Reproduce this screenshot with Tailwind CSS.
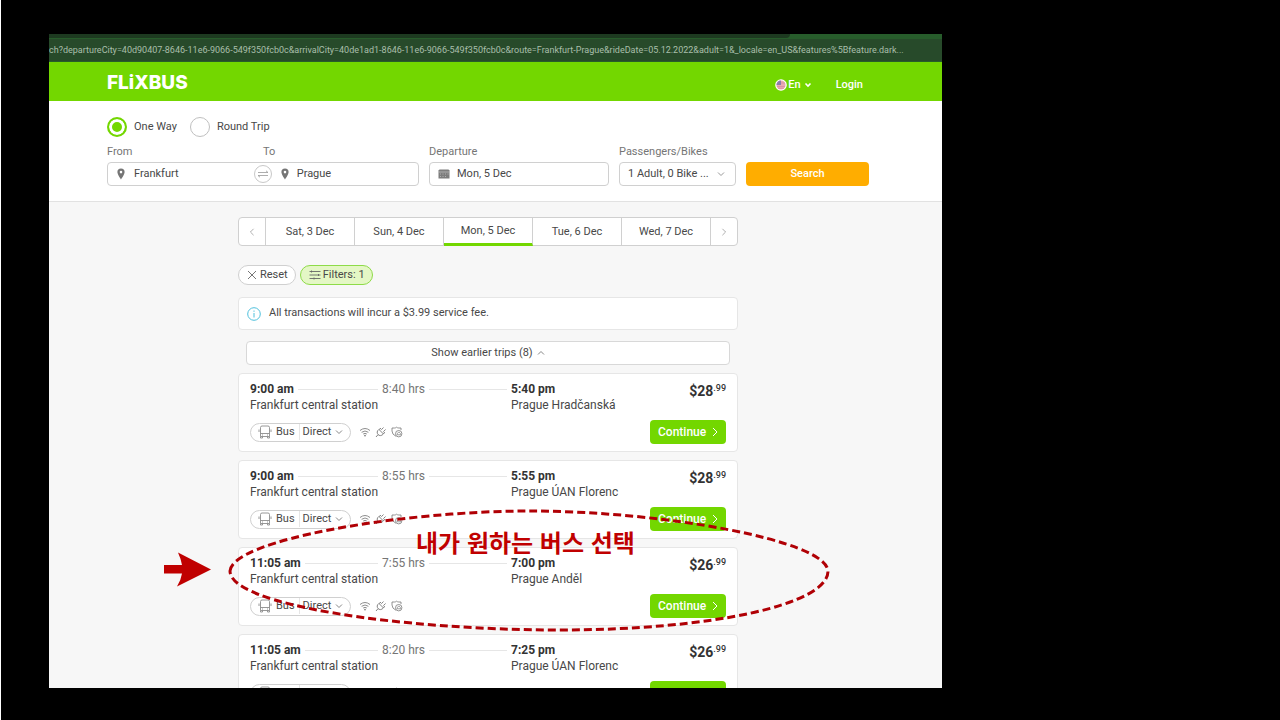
<!DOCTYPE html>
<html lang="en">
<head>
  <meta charset="UTF-8" />
  <meta name="viewport" content="width=device-width, initial-scale=1" />
  <title>FlixBus - Frankfurt to Prague</title>
  <script src="https://cdn.jsdelivr.net/npm/@tailwindcss/browser@4"></script>
</head>
<body class="bg-black font-['Roboto',sans-serif] text-[#484848] antialiased">

  <!-- Shared icons -->
  <svg class="hidden">
    <symbol id="pin" viewBox="0 0 10 12">
      <path fill="#757575" fill-rule="evenodd" d="M5 .5A3.6 3.6 0 0 0 1.4 4.1C1.4 6.700 5 11.500 5 11.500S8.600 6.700 8.600 4.100A3.600 3.600 0 0 0 5 .5zM5 2.800a1.300 1.300 0 1 1 0 2.600 1.300 1.300 0 0 1 0-2.600z" />
    </symbol>
    <symbol id="down" viewBox="0 0 8 6"><path d="M1 1.500l3 3 3-3" fill="none" stroke="currentColor" /></symbol>
    <symbol id="right" viewBox="0 0 6 10"><path d="M1 1l4 4-4 4" fill="none" stroke="currentColor" /></symbol>
    <symbol id="bus" viewBox="0 0 14 14">
      <path d="M2.500 11.500V2.500q0-1.500 1.500-1.500h6q1.500 0 1.500 1.500v9zM2.500 8.500h9M1 4.500v2.500M13 4.500v2.500M2.500 11.500v1.500h2v-1.500M9.500 11.500v1.500h2v-1.500M4 10h1M9 10h1" fill="none" stroke="#8c8c8c" stroke-width=".9" />
    </symbol>
    <symbol id="wifi" viewBox="0 0 12 10">
      <path d="M1 3.500q5-4 10 0M2.600 5.300q3.400-2.600 6.800 0M4.200 7q1.800-1.300 3.600 0" fill="none" stroke="#808080" stroke-width=".9" />
      <circle cx="6" cy="8.600" r=".9" fill="#808080" />
    </symbol>
    <symbol id="plug" viewBox="0 0 12 12">
      <path d="M4 3.500l4.500 4.500M3.800 3.500C1.800 5 1.800 7 3 8.500s3.500 1.500 5.300-.4M4 3.500l2-1.300M8.500 8l1.200-2M6.300 3.800L8.500 1.500M8.300 5.700l2.300-2.200M3 8.700L1 11" fill="none" stroke="#777" stroke-width=".9" />
    </symbol>
    <symbol id="shield" viewBox="0 0 12 12">
      <path d="M5 10.300Q1 8.500 1 5V2h2.500q1.200 0 2-.8 1 .8 2.300.8H10v2" fill="none" stroke="#777" stroke-width=".8" />
      <circle cx="7.700" cy="7.700" r="3.200" fill="none" stroke="#777" stroke-width=".8" />
      <path d="M6.200 7.500l1.700-1.500 1.500 1.500v1.300H6.200z" fill="none" stroke="#777" stroke-width=".7" />
    </symbol>
  </svg>

  <div class="h-screen border-l border-white pt-[34px] pb-8 pl-12 pr-[338px]">
    <div class="relative h-full">
      <div class="flex h-full flex-col overflow-hidden bg-[#f7f7f7]">

        <!-- Browser bar -->
        <div class="shrink-0 bg-[#275c2b]">
          <div class="mr-[152px] h-1 rounded-br bg-[#1d3a20]"></div>
          <div class="mt-px flex h-[22px] items-center bg-[#274a2a]">
            <input aria-label="Address" readonly class="w-full font-['Roboto',sans-serif] text-[9px] leading-[14px] text-[#a9bfaa] outline-none" value="ch?departureCity=40d90407-8646-11e6-9066-549f350fcb0c&amp;arrivalCity=40de1ad1-8646-11e6-9066-549f350fcb0c&amp;route=Frankfurt-Prague&amp;rideDate=05.12.2022&amp;adult=1&amp;_locale=en_US&amp;features%5Bfeature.dark..." />
          </div>
          <div class="h-px"></div>
        </div>

        <!-- Header -->
        <header class="flex h-[39px] shrink-0 items-center justify-between bg-[#73d700] pl-[58px] pr-[79px] text-white">
          <a href="#" class="pt-0.5 font-['Inter',sans-serif] text-[19px] leading-5 font-extrabold">FLiXBUS</a>
          <nav class="flex items-center gap-6 pt-1.5 text-[11px] leading-4 font-medium">
            <button class="flex items-center gap-px">
              <svg class="size-3" viewBox="0 0 12 12">
                <circle cx="6" cy="6" r="5.200" fill="#e9a9b4" stroke="#fff" stroke-width="1.200" />
                <path d="M1.500 6A4.500 4.500 0 0 1 6 1.500V6z" fill="#8a7cae" />
                <path d="M6 4h4M2 7.500h8M3 9.300h6" stroke="#d58a9c" stroke-width=".7" />
              </svg>
              En
              <svg class="ml-0.5 h-1.5 w-2" viewBox="0 0 8 6"><path d="M1.500 1.500l2.500 2.500 2.500-2.500" fill="none" stroke="#fff" stroke-width="1.600" /></svg>
            </button>
            <a href="#">Login</a>
          </nav>
        </header>

        <!-- Search form -->
        <form class="h-[101px] shrink-0 border-b border-[#e2e2e2] bg-white pl-[58px] pr-[73px] pt-4 text-[11px] leading-4">
          <div class="flex h-5 items-center">
            <input type="radio" id="oneWay" name="trip" checked class="size-5 appearance-none rounded-full border-2 border-[#73d700] bg-white checked:bg-[#73d700] checked:shadow-[inset_0_0_0_3px_#fff]" />
            <label for="oneWay" class="ml-[7px] mr-[13px]">One Way</label>
            <input type="radio" id="roundTrip" name="trip" class="size-5 appearance-none rounded-full border border-[#c0c0c0] bg-white" />
            <label for="roundTrip" class="ml-[7px]">Round Trip</label>
          </div>
          <div class="mt-[7px] grid grid-cols-[312fr_180fr_117fr_123fr] items-end gap-[10px]">
            <div class="min-w-0">
              <div class="flex text-[#757575]">
                <label for="from" class="w-1/2">From</label>
                <label for="to">To</label>
              </div>
              <div class="mt-0.5 flex h-6 items-center rounded-sm border border-[#d0d0d0]">
                <div class="flex w-[47%] items-center">
                  <svg class="ml-2 h-3 w-[10px] shrink-0"><use href="#pin" /></svg>
                  <input id="from" class="ml-2 w-0 flex-1 outline-none" value="Frankfurt" />
                </div>
                <button type="button" aria-label="Swap" class="flex size-[18px] shrink-0 items-center justify-center rounded-full border border-[#c8c8c8]">
                  <svg class="h-2 w-3 shrink-0" viewBox="0 0 12 8"><path d="M1 2.500h10M9 .8l2 1.700M11 5.500H1M3 7.200L1 5.500" fill="none" stroke="#999" stroke-width=".8" /></svg>
                </button>
                <svg class="ml-2 h-3 w-[10px] shrink-0"><use href="#pin" /></svg>
                <input id="to" class="ml-[7px] w-0 flex-1 outline-none" value="Prague" />
              </div>
            </div>
            <div class="min-w-0">
              <label for="departure" class="block text-[#757575]">Departure</label>
              <div class="mt-0.5 flex h-6 items-center rounded-sm border border-[#d0d0d0]">
                <svg class="ml-2 h-[10px] w-3 shrink-0" viewBox="0 0 12 10">
                  <path d="M1.500 .5h9l1 1v8H.5v-8z" fill="#7d7d7d" />
                  <path d="M.5 3h11M2 5h1M4.500 5h1M7 5h1M9.500 5h1M2 7.500h1M4.500 7.500h1M7 7.500h1" stroke="#c5c5c5" stroke-width=".7" />
                </svg>
                <input id="departure" class="ml-[7px] w-0 flex-1 outline-none" value="Mon, 5 Dec" />
              </div>
            </div>
            <div class="min-w-0">
              <label for="passengers" class="block text-[#757575]">Passengers/Bikes</label>
              <div class="mt-0.5 flex h-6 items-center rounded-sm border border-[#d0d0d0] pr-[10px]">
                <select id="passengers" class="w-0 flex-1 appearance-none pl-2 outline-none">
                  <option>1 Adult, 0 Bike ...</option>
                </select>
                <svg class="h-1.5 w-2 shrink-0 text-[#999]"><use href="#down" /></svg>
              </div>
            </div>
            <button class="h-6 rounded-sm bg-[#ffad00] font-medium text-white">Search</button>
          </div>
        </form>

        <!-- Results -->
        <main class="min-h-0 flex-1 pr-[15px] pt-[15px]">
          <div class="mx-auto max-w-[500px]">
            <nav class="flex h-[29px] divide-x divide-[#d0d0d0] rounded-sm border border-[#d0d0d0] bg-white text-[11px]">
              <button aria-label="Previous" class="flex w-[27px] items-center justify-center text-[#999]"><svg class="h-2 w-1.5 rotate-180"><use href="#right" /></svg></button>
              <button class="flex-1 pt-px">Sat, 3 Dec</button>
              <button class="flex-1 pt-px">Sun, 4 Dec</button>
              <button class="-mb-px flex-1 border-b-[3px] border-b-[#73d700] pt-px">Mon, 5 Dec</button>
              <button class="flex-1 pt-px">Tue, 6 Dec</button>
              <button class="flex-1 pt-px">Wed, 7 Dec</button>
              <button aria-label="Next" class="flex w-[26px] items-center justify-center text-[#999]"><svg class="h-2 w-1.5"><use href="#right" /></svg></button>
            </nav>

            <div class="mt-[19px] flex h-5 gap-1 text-[11px]">
              <button class="flex items-center gap-[3px] rounded-full border border-[#d0d0d0] bg-white pr-[7px] pl-2">
                <svg class="size-[10px]" viewBox="0 0 10 10"><path d="M1 1l8 8M9 1L1 9" stroke="#666" stroke-width=".9" /></svg>
                Reset
              </button>
              <button class="flex items-center gap-0.5 rounded-full border border-[#8edb48] bg-[#e4f7c5] pr-[7px] pl-2">
                <svg class="h-[10px] w-3" viewBox="0 0 12 10"><path d="M.5 1.500h11M.5 5h11M.5 8.500h11M2.500 .5v2M9.500 4v2M5 7.500v2" stroke="#666" stroke-width=".9" /></svg>
                Filters: 1
              </button>
            </div>

            <div class="mt-3 flex h-[33px] items-center gap-2 rounded-sm border border-[#e6e6e6] bg-white px-2 text-[11px]">
              <svg class="size-[14px] shrink-0" viewBox="0 0 14 14">
                <circle cx="7" cy="7" r="6.300" fill="none" stroke="#4fc0dc" />
                <path d="M7 6v4.500M7 3.500v1.300" stroke="#4fc0dc" />
              </svg>
              <p>All transactions will incur a $3.99 service fee.</p>
            </div>

            <div class="mt-[11px] px-2">
              <button class="flex h-6 w-full items-center justify-center gap-1 rounded-sm border border-[#d8d8d8] bg-white text-[11px]">
                Show earlier trips (8)
                <svg class="h-1.5 w-2 rotate-180 text-[#888]"><use href="#down" /></svg>
              </button>
            </div>

            <div id="trips" class="mt-2 space-y-2"></div>
          </div>
        </main>
      </div>

      <!-- Annotation -->
      <svg class="pointer-events-none absolute left-[111px] top-[468px] h-[136px] w-[680px]" viewBox="160 502 680 136">
        <path d="M230 571C232 540 400 511 530 511C660 511 826 540 828 571C828 605 710 630 560 630C400 630 230 605 230 571z" fill="none" stroke="#b00005" stroke-width="3" stroke-dasharray="8 4" />
        <path d="M164 565H182Q181 559 178 552.500L211 569.500 177 586.500Q181 580 182 573.500H164z" fill="#c00000" />
      </svg>
      <p lang="ko" class="absolute left-[367px] top-[496px] font-['Noto_Sans_CJK_KR',sans-serif] text-2xl leading-6 font-bold whitespace-nowrap text-[#c00000]">내가 원하는 버스 선택</p>
    </div>
  </div>

  <script>
    const trips = [
      { start: "9:00 am", end: "5:40 pm", hours: "8:40 hrs", stop: "Prague Hradčanská", price: "28" },
      { start: "9:00 am", end: "5:55 pm", hours: "8:55 hrs", stop: "Prague ÚAN Florenc", price: "28" },
      { start: "11:05 am", end: "7:00 pm", hours: "7:55 hrs", stop: "Prague Anděl", price: "26" },
      { start: "11:05 am", end: "7:25 pm", hours: "8:20 hrs", stop: "Prague ÚAN Florenc", price: "26" },
    ];

    document.getElementById("trips").innerHTML = trips.map(trip => `
      <article class="h-[79px] rounded-sm border border-[#e6e6e6] bg-white px-[11px] pt-[7px] text-[12px] leading-4">
        <div class="flex">
          <div class="w-[261px]">
            <div class="flex items-center gap-1 pr-1">
              <b class="font-bold text-[#333]">${trip.start}</b>
              <span class="h-px flex-1 bg-[#e6e6e6]"></span>
              <span class="text-[#757575]">${trip.hours}</span>
              <span class="h-px w-[78px] bg-[#e6e6e6]"></span>
            </div>
            <p>Frankfurt central station</p>
          </div>
          <div class="flex-1">
            <b class="block font-bold text-[#333]">${trip.end}</b>
            <p>${trip.stop}</p>
          </div>
          <div class="flex items-start pt-0.5 font-bold text-[#333]">
            <span class="text-[14px] leading-4">$${trip.price}</span><span class="text-[9px] leading-[10px] font-medium">.99</span>
          </div>
        </div>
        <div class="mt-[7px] flex h-6 items-center">
          <button class="flex h-[19px] items-center rounded-full border border-[#d0d0d0] px-[7px] text-[11px] leading-4">
            <svg class="size-[14px]"><use href="#bus" /></svg>
            <span class="ml-1 border-r border-[#e6e6e6] pr-1">Bus</span>
            <span class="mx-[3px]">Direct</span>
            <svg class="ml-px h-1.5 w-2 text-[#888]"><use href="#down" /></svg>
          </button>
          <svg class="ml-2 h-[10px] w-3"><use href="#wifi" /></svg>
          <svg class="ml-1 size-3"><use href="#plug" /></svg>
          <svg class="ml-1 size-3"><use href="#shield" /></svg>
          <button class="ml-auto flex h-6 w-[76px] items-center justify-between rounded-sm bg-[#73d700] px-2 font-medium text-white">
            Continue
            <svg class="h-[10px] w-1.5"><use href="#right" /></svg>
          </button>
        </div>
      </article>`).join("");
  </script>
</body>
</html>
